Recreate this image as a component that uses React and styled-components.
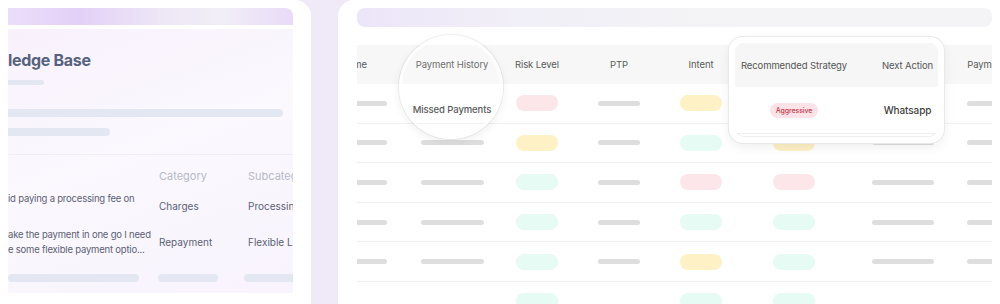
import styled, { createGlobalStyle } from "styled-components";

const GlobalStyle = createGlobalStyle`
  body {
    margin: 0;
    background: #efe8f6;
    font-family: Inter, "Liberation Sans", sans-serif;
  }
`;

const Stage = styled.div`
  width: 1000px;
  height: 304px;
  overflow: hidden;
  display: flex;
  background: linear-gradient(90deg, #f1ebf8 0%, #ede6f5 100%);
`;

/* ---------- left panel: knowledge base ---------- */

const LeftFrame = styled.div`
  width: 311px;
  flex: none;
  box-sizing: border-box;
  background: #ffffff;
  border-top-right-radius: 16px;
  padding: 8px 18px 0 8px;
`;

const KbCard = styled.div`
  height: 285px;
  display: flex;
  flex-direction: column;
  gap: 4px;
`;

const KbStrip = styled.div`
  height: 17px;
  flex: none;
  border-top-right-radius: 8px;
  background: linear-gradient(
    90deg,
    #ebdefa 0%,
    #e3d0f7 25%,
    #eee8f6 55%,
    #f1eef6 75%,
    #e9dbf8 100%
  );
`;

const KbBody = styled.div`
  flex: 1;
  display: flex;
  flex-direction: column;
  overflow: hidden;
  background: linear-gradient(160deg, #f8f1fc 0%, #fbf8fe 45%, #f8f3fd 100%);
`;

const KbTop = styled.div`
  padding: 21px 0 18px;
  border-bottom: 1px solid #f1edf6;
  display: flex;
  flex-direction: column;
`;

const KbTitle = styled.h2`
  margin: 0;
  font-size: 16px;
  line-height: 20px;
  font-weight: 700;
  color: #56627e;
  letter-spacing: -0.3px;
`;

const Skel = styled.div`
  height: ${(p) => p.$h || 8}px;
  width: ${(p) => p.$w}px;
  margin-top: ${(p) => p.$mt || 0}px;
  border-radius: 0 4px 4px 0;
  background: #e3e7f1;
`;

const KbTable = styled.div`
  padding-top: 14px;
  display: grid;
  grid-template-columns: 151px 89px 1fr;
`;

const KbHead = styled.div`
  height: 14px;
  line-height: 14px;
  font-size: 11px;
  color: #b6bac8;
  margin-bottom: 8px;
  white-space: nowrap;
  overflow: hidden;
`;

const KbCell = styled.div`
  height: 30px;
  margin-bottom: ${(p) => p.$mb}px;
  display: flex;
  flex-direction: column;
  justify-content: center;
  font-size: ${(p) => (p.$q ? "9.5px" : "10px")};
  line-height: 15px;
  color: #5b6174;
  white-space: nowrap;
  overflow: hidden;
  letter-spacing: ${(p) => (p.$q ? "-0.2px" : "0")};
`;

const KbBar = styled.div`
  height: 8px;
  width: ${(p) => p.$w}px;
  margin-left: ${(p) => p.$ml || 0}px;
  border-radius: 4px;
  background: #e3e7f1;
`;

/* ---------- right panel: collections table ---------- */

const RightFrame = styled.div`
  flex: 1;
  margin-left: 27px;
  position: relative;
  box-sizing: border-box;
  background: #ffffff;
  border-top-left-radius: 16px;
  padding: 8px 8px 0 19px;
  overflow: hidden;
`;

const TopBar = styled.div`
  height: 19px;
  border-radius: 8px;
  background: linear-gradient(90deg, #ece5f9 0%, #f1eff7 25%, #f4f4f6 60%, #f4f4f6 100%);
`;

const TableClip = styled.div`
  margin-top: 18px;
  overflow: hidden;
`;

const cols = "80px 92px 78px 86px 78px 108px 110px 80px";

const Table = styled.div`
  margin-left: -31px;
  width: 712px;
`;

const HeadRow = styled.div`
  display: grid;
  grid-template-columns: ${cols};
  height: 39px;
  background: #f7f7f7;
`;

const HeadCell = styled.div`
  display: flex;
  align-items: center;
  justify-content: center;
  padding-right: ${(p) => p.$shift || 0}px;
  font-size: 9.5px;
  color: #5a5a5a;
  white-space: nowrap;
  letter-spacing: -0.1px;
`;

const Row = styled.div`
  display: grid;
  grid-template-columns: ${cols};
  height: 39.6px;
  box-sizing: border-box;
  border-bottom: 1px solid #f1f1f1;
`;

const Cell = styled.div`
  display: flex;
  align-items: center;
  justify-content: center;
  padding-top: ${(p) => p.$drop || 0}px;
  font-size: 9.5px;
  font-weight: 500;
  color: #444444;
  white-space: nowrap;
  letter-spacing: -0.1px;
`;

const Bar = styled.div`
  height: 5px;
  width: ${(p) => p.$w}px;
  border-radius: 3px;
  background: #dedede;
`;

const pillColors = {
  red: "#fde6ea",
  yellow: "#fef1c6",
  green: "#e5fbf3",
};

const Pill = styled.div`
  height: 16px;
  width: 42px;
  border-radius: 8px;
  background: ${(p) => pillColors[p.$tone]};
`;

const Lens = styled.div`
  position: absolute;
  left: 61px;
  top: 35px;
  width: 104px;
  height: 104px;
  border-radius: 50%;
  box-sizing: border-box;
  border: 3px solid rgba(255, 255, 255, 0.7);
  box-shadow: 0 0 0 1px rgba(0, 0, 0, 0.06), 0 3px 10px rgba(0, 0, 0, 0.07);
  background: rgba(255, 255, 255, 0.12);
`;

const Callout = styled.div`
  position: absolute;
  left: 391px;
  top: 37px;
  width: 215px;
  height: 106px;
  box-sizing: border-box;
  border: 6px solid #ffffff;
  border-radius: 14px;
  background: #ffffff;
  box-shadow: 0 0 0 1px #e9e9e9, 0 4px 12px rgba(0, 0, 0, 0.07);
`;

const CalloutInner = styled.div`
  height: 100%;
  border-radius: 9px;
  overflow: hidden;
  box-shadow: inset 0 0 0 1px #eeeeee;
`;

const CalloutRow = styled.div`
  display: grid;
  grid-template-columns: 118px 1fr;
  height: ${(p) => p.$h}px;
  background: ${(p) => (p.$head ? "#f6f6f6" : "#ffffff")};
  border-bottom: ${(p) => (p.$head ? "none" : "1px solid #eeeeee")};
`;

const CalloutCell = styled.div`
  display: flex;
  align-items: center;
  justify-content: center;
  padding-left: ${(p) => p.$pl || 0}px;
  font-size: ${(p) => (p.$strong ? "10px" : "9.5px")};
  font-weight: ${(p) => (p.$strong ? 500 : 400)};
  color: ${(p) => (p.$strong ? "#3f3f3f" : "#555555")};
  white-space: nowrap;
  letter-spacing: -0.1px;
`;

const Badge = styled.span`
  display: inline-flex;
  align-items: center;
  justify-content: center;
  height: 15px;
  padding: 0 6px;
  border-radius: 8px;
  background: #fde3e8;
  color: #c23b4c;
  font-size: 7px;
  font-weight: 500;
`;

/* recommended strategy and next action headers live in the callout */
const headers = ["Name", "Payment History", "Risk Level", "PTP", "Intent", "", "", "Payment Date"];

const rows = [
  [null, "Missed Payments", "red", null, "yellow", "none", "none"],
  [null, null, "yellow", null, "green", "yellow", null],
  [null, null, "green", null, "red", "red", null],
  [null, null, "green", null, "green", "green", null],
  [null, null, "green", null, "yellow", "green", null],
  ["none", "none", "green", "none", "green", "green", "none"],
];

const barWidths = [42, 63, 42, 42, 42, 42, 62, 62];

function renderCell(value, i) {
  if (value === "none") return <Cell key={i} />;
  if (value === "Missed Payments") return <Cell key={i} $drop={12}>{value}</Cell>;
  if (value && pillColors[value]) {
    return (
      <Cell key={i}>
        <Pill $tone={value} />
      </Cell>
    );
  }
  return (
    <Cell key={i}>
      <Bar $w={barWidths[i]} />
    </Cell>
  );
}

const kbRows = [
  { q: ["id paying a processing fee on", "\u00a0"], cat: "Charges", sub: "Processing Fee" },
  {
    q: ["ake the payment in one go I need", "e some flexible payment optio..."],
    cat: "Repayment",
    sub: "Flexible Loan",
  },
];

export default function App() {
  return (
    <>
      <GlobalStyle />
      <Stage>
        <LeftFrame>
          <KbCard>
            <KbStrip />
            <KbBody>
              <KbTop>
                <KbTitle>ledge Base</KbTitle>
                <Skel $h={5} $w={36} $mt={10} />
                <Skel $w={275} $mt={24} />
                <Skel $w={102} $mt={11} />
              </KbTop>
              <KbTable>
                <KbHead />
                <KbHead>Category</KbHead>
                <KbHead>Subcategory</KbHead>
                {kbRows.map((r, idx) => {
                  const mb = idx === 0 ? 6 : 16.5;
                  return [
                    <KbCell key={`q${idx}`} $q $mb={mb}>
                      {r.q.map((line, j) => (
                        <span key={j}>{line}</span>
                      ))}
                    </KbCell>,
                    <KbCell key={`c${idx}`} $mb={mb}>
                      {r.cat}
                    </KbCell>,
                    <KbCell key={`s${idx}`} $mb={mb}>
                      {r.sub}
                    </KbCell>,
                  ];
                })}
                <KbBar $w={131} />
                <KbBar $w={60} $ml={-1} />
                <KbBar $w={80} $ml={-4} />
              </KbTable>
            </KbBody>
          </KbCard>
        </LeftFrame>

        <RightFrame>
          <TopBar />
          <TableClip>
            <Table>
              <HeadRow>
                {headers.map((h, i) => (
                  <HeadCell key={i} $shift={i === 0 ? 24 : 0}>
                    {h}
                  </HeadCell>
                ))}
              </HeadRow>
              {rows.map((r, idx) => (
                <Row key={idx}>
                  {r.map((v, i) => renderCell(v, i))}
                  {renderCell(idx === 5 ? "none" : null, 7)}
                </Row>
              ))}
            </Table>
          </TableClip>

          <Lens />

          <Callout>
            <CalloutInner>
              <CalloutRow $head $h={44}>
                <CalloutCell>Recommended Strategy</CalloutCell>
                <CalloutCell $pl={24}>Next Action</CalloutCell>
              </CalloutRow>
              <CalloutRow $h={46}>
                <CalloutCell>
                  <Badge>Aggressive</Badge>
                </CalloutCell>
                <CalloutCell $pl={24} $strong>
                  Whatsapp
                </CalloutCell>
              </CalloutRow>
            </CalloutInner>
          </Callout>
        </RightFrame>
      </Stage>
    </>
  );
}
